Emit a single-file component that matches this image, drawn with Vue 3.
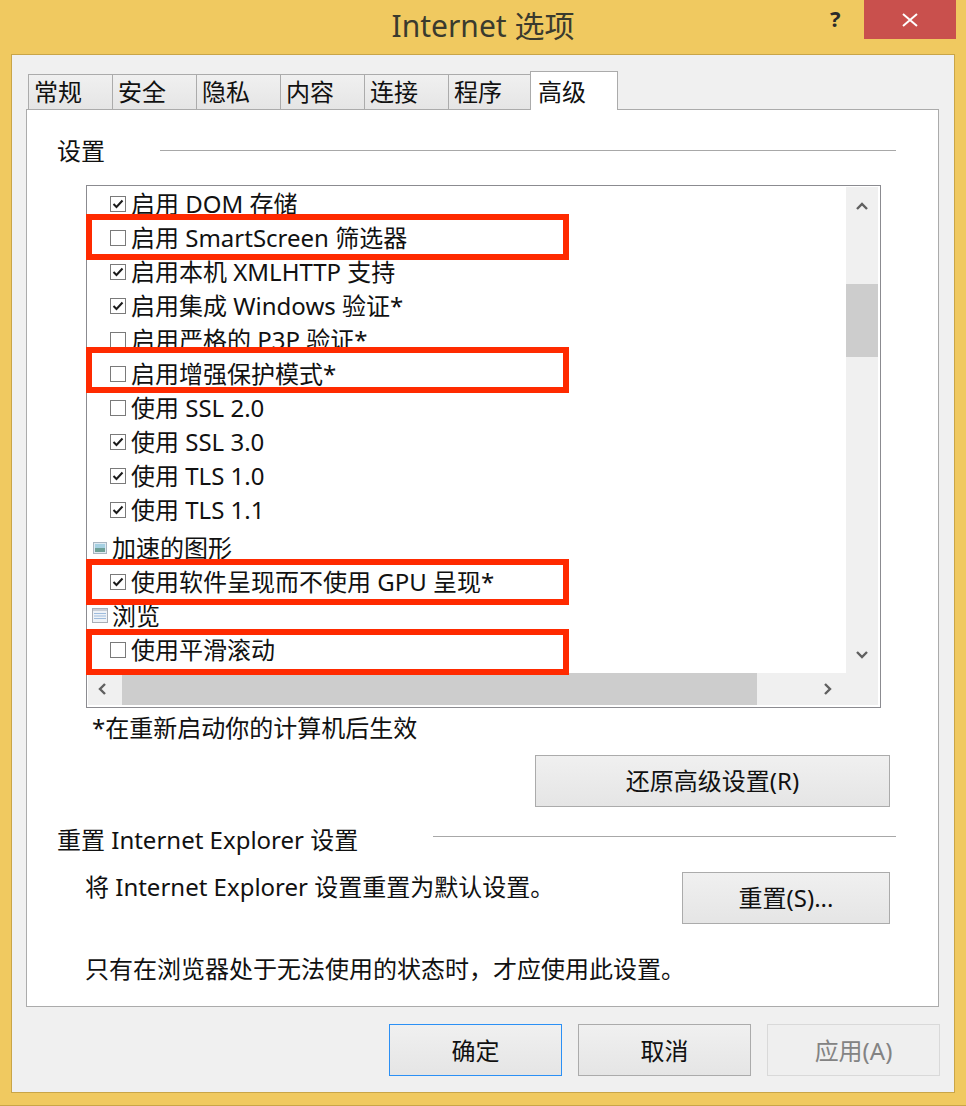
<script setup>
const tabs = ['常规', '安全', '隐私', '内容', '连接', '程序']
const rows = [
  { t: '启用 DOM 存储', c: true },
  { t: '启用 SmartScreen 筛选器', c: false },
  { t: '启用本机 XMLHTTP 支持', c: true },
  { t: '启用集成 Windows 验证*', c: true },
  { t: '启用严格的 P3P 验证*', c: false },
  { t: '启用增强保护模式*', c: false },
  { t: '使用 SSL 2.0', c: false },
  { t: '使用 SSL 3.0', c: true },
  { t: '使用 TLS 1.0', c: true },
  { t: '使用 TLS 1.1', c: true },
  { t: '加速的图形', g: 'pic' },
  { t: '使用软件呈现而不使用 GPU 呈现*', c: true },
  { t: '浏览', g: 'win' },
  { t: '使用平滑滚动', c: false }
]
const marks = [
  { top: 28, height: 46, width: 483 },
  { top: 161, height: 46, width: 483 },
  { top: 373, height: 46, width: 483 },
  { top: 443, height: 46, width: 483 }
]
</script>

<template>
  <div class="win">
    <header class="title">
      <span class="title-text">Internet 选项</span>
      <span class="help">?</span>
      <span class="close">
        <svg width="18" height="14" viewBox="0 0 18 14"><path d="M2 1 16 13M16 1 2 13" stroke="#fff" stroke-width="2" fill="none" /></svg>
      </span>
    </header>
    <main class="client">
      <nav class="tabs">
        <span v-for="t in tabs" :key="t" class="tab">{{ t }}</span>
        <span class="tab active">高级</span>
      </nav>
      <section class="panel">
        <div class="legend first"><span>设置</span><i></i></div>
        <div class="listbox">
          <div class="list-view">
            <div class="rows">
              <div v-for="r in rows" :key="r.t" class="row" :class="{ group: r.g }">
                <svg v-if="r.g === 'pic'" class="gicon" width="16" height="14" viewBox="0 0 16 14">
                  <rect x="1.5" y="1.5" width="13" height="11" fill="#dfeaf2" stroke="#a9b6c2" />
                  <rect x="3" y="3" width="10" height="4" fill="#a5d0e2" />
                  <rect x="3" y="7" width="10" height="4" fill="#6d9f96" />
                </svg>
                <svg v-else-if="r.g === 'win'" class="gicon" width="16" height="16" viewBox="0 0 16 16">
                  <rect x="0.5" y="0.5" width="15" height="14" fill="#eef2f7" stroke="#a9aeb6" />
                  <rect x="1" y="1" width="14" height="2" fill="#c9ced6" />
                  <path d="M2 5.5h12M2 8h12M2 10.5h12" stroke="#9dbbdc" />
                </svg>
                <span v-else class="check">
                  <svg v-if="r.c" width="12" height="10" viewBox="0 0 12 10"><path d="M1.5 5 4.5 8 10.5 1.5" stroke="#1b1b1b" stroke-width="2" fill="none" /></svg>
                </span>
                <span class="row-text">{{ r.t }}</span>
              </div>
            </div>
            <div class="vbar">
              <svg class="arrow" width="12" height="8" viewBox="0 0 12 8"><path d="M1 7 6 2l5 5" stroke="#606060" stroke-width="2.4" fill="none" /></svg>
              <span class="vthumb"></span>
              <svg class="arrow down" width="12" height="8" viewBox="0 0 12 8"><path d="M1 1l5 5 5-5" stroke="#606060" stroke-width="2.4" fill="none" /></svg>
            </div>
          </div>
          <div class="hbar">
            <svg class="harrow" width="8" height="12" viewBox="0 0 8 12"><path d="M7 1 2 6l5 5" stroke="#606060" stroke-width="2.4" fill="none" /></svg>
            <span class="hthumb"></span>
            <svg class="harrow right" width="8" height="12" viewBox="0 0 8 12"><path d="M1 1l5 5-5 5" stroke="#606060" stroke-width="2.4" fill="none" /></svg>
          </div>
          <div
            v-for="m in marks"
            :key="m.top"
            class="mark"
            :style="{ top: m.top + 'px', height: m.height + 'px', width: m.width + 'px' }"
          ></div>
        </div>
        <p class="note">*在重新启动你的计算机后生效</p>
        <div class="restore-line"><button class="btn restore">还原高级设置(R)</button></div>
        <div class="legend second"><span>重置 Internet Explorer 设置</span><i></i></div>
        <div class="reset-line">
          <p>将 Internet Explorer 设置重置为默认设置。</p>
          <button class="btn reset">重置(S)...</button>
        </div>
        <p class="warn">只有在浏览器处于无法使用的状态时，才应使用此设置。</p>
      </section>
      <footer class="actions">
        <button class="btn act primary">确定</button>
        <button class="btn act">取消</button>
        <button class="btn act off">应用(A)</button>
      </footer>
    </main>
  </div>
</template>

<style>
html, body { margin: 0; background: #f0c960; }
</style>

<style scoped>
.win {
  width: 966px;
  height: 1106px;
  box-sizing: border-box;
  background: #f0c960;
  border-bottom: 1px solid #c9a548;
  font-family: "Noto Sans", "Noto Sans CJK SC", sans-serif;
  font-size: 24px;
  color: #111;
  display: flex;
  flex-direction: column;
  overflow: hidden;
}
.title {
  height: 54px;
  flex: none;
  position: relative;
  display: flex;
  justify-content: center;
}
.title-text {
  font-size: 30px;
  line-height: 52px;
  color: #3a3a2e;
}
.help {
  position: absolute;
  left: 830px;
  top: 4px;
  font-size: 22px;
  line-height: 28px;
  font-weight: 700;
  color: #2b2b2b;
}
.close {
  position: absolute;
  left: 864px;
  top: 0;
  width: 92px;
  height: 39px;
  background: #c9504d;
  display: flex;
  align-items: center;
  justify-content: center;
}
.client {
  width: 944px;
  height: 1039px;
  margin-left: 11px;
  box-sizing: border-box;
  background: #f0f0f0;
  border: 1px solid #c9a548;
  padding: 17px 16px 0 14px;
  display: flex;
  flex-direction: column;
}
.tabs {
  display: flex;
  height: 38px;
  align-items: flex-end;
  padding-left: 2px;
  margin-bottom: -1px;
  position: relative;
  z-index: 1;
}
.tab {
  width: 84px;
  height: 36px;
  box-sizing: border-box;
  border: 1px solid #ababab;
  border-right-width: 0;
  background: linear-gradient(#f0f0f0, #e5e5e5);
  line-height: 34px;
  padding-left: 5px;
}
.tab.active {
  width: 88px;
  height: 39px;
  margin-left: -2px;
  border-right-width: 1px;
  border-bottom: 0;
  background: #fff;
  line-height: 39px;
  padding-left: 7px;
}
.panel {
  width: 913px;
  height: 898px;
  flex: none;
  box-sizing: border-box;
  background: #fff;
  border: 1px solid #ababab;
  padding: 0 42px 0 30px;
  display: flex;
  flex-direction: column;
}
.legend {
  display: flex;
  align-items: center;
  line-height: 34px;
}
.legend i {
  flex: 1;
  height: 1px;
  background: #a8a8a8;
}
.legend.first { margin-top: 24px; }
.legend.first span { width: 103px; }
.legend.first i { margin-bottom: 2px; }
.legend.second { margin-top: 16px; }
.legend.second span { width: 376px; }
.legend.second i { margin-bottom: 8px; }
.listbox {
  position: relative;
  width: 795px;
  height: 523px;
  box-sizing: border-box;
  margin: 17px 0 0 29px;
  border: 1px solid #8b8b90;
  padding: 1px 2px 2px 1px;
  display: flex;
  flex-direction: column;
}
.list-view {
  height: 486px;
  display: flex;
  flex: none;
}
.rows {
  flex: 1;
  overflow: hidden;
}
.row {
  height: 34px;
  display: flex;
  align-items: center;
  padding-left: 22px;
  white-space: nowrap;
}
.row-text {
  padding-bottom: 4px;
}
.row.group {
  padding-left: 4px;
}
.row.group:nth-child(11) { margin-top: 4px; }
.check {
  width: 16px;
  height: 16px;
  box-sizing: border-box;
  border: 1px solid #7a7a7a;
  background: #fff;
  display: flex;
  align-items: center;
  justify-content: center;
  flex: none;
  margin-right: 5px;
}
.gicon { flex: none; margin-right: 4px; }
.vbar {
  width: 32px;
  background: #f0f0f0;
  display: flex;
  flex-direction: column;
  align-items: center;
  position: relative;
  flex: none;
}
.arrow { position: absolute; top: 15px; }
.arrow.down { top: auto; bottom: 14px; }
.vthumb {
  position: absolute;
  top: 97px;
  left: 0;
  width: 32px;
  height: 73px;
  background: #cdcdcd;
}
.hbar {
  height: 32px;
  flex: none;
  background: #f0f0f0;
  position: relative;
}
.harrow { position: absolute; left: 10px; top: 10px; }
.harrow.right { left: auto; right: 46px; }
.hthumb {
  position: absolute;
  left: 34px;
  top: 0;
  width: 635px;
  height: 32px;
  background: #cdcdcd;
}
.mark {
  position: absolute;
  left: -1px;
  box-sizing: border-box;
  border: 6.5px solid #ff2a00;
}
.note {
  margin: 1px 0 0 35px;
  line-height: 38px;
}
.btn {
  font: inherit;
  color: #111;
  box-sizing: border-box;
  border: 1px solid #ababab;
  background: linear-gradient(#f0f0f0, #e5e5e5);
  padding: 0 0 4px;
}
.restore-line {
  display: flex;
  justify-content: flex-end;
  margin-top: 8px;
  margin-right: 6px;
}
.restore { width: 355px; height: 52px; }
.reset-line {
  display: flex;
  justify-content: space-between;
  margin: 15px 6px 0 28px;
}
.reset-line p { margin: -2px 0 0; line-height: 34px; }
.reset { width: 208px; height: 52px; }
.warn { margin: 28px 0 0 28px; line-height: 34px; }
.actions {
  display: flex;
  gap: 16px;
  margin-top: 17px;
  padding-left: 363px;
}
.act { flex: none; width: 173px; height: 52px; padding-bottom: 2px; }
.primary { border-color: #2b90f5; }
.off {
  color: #838383;
  border-color: #d9d9d9;
  background: #efefef;
}
</style>
